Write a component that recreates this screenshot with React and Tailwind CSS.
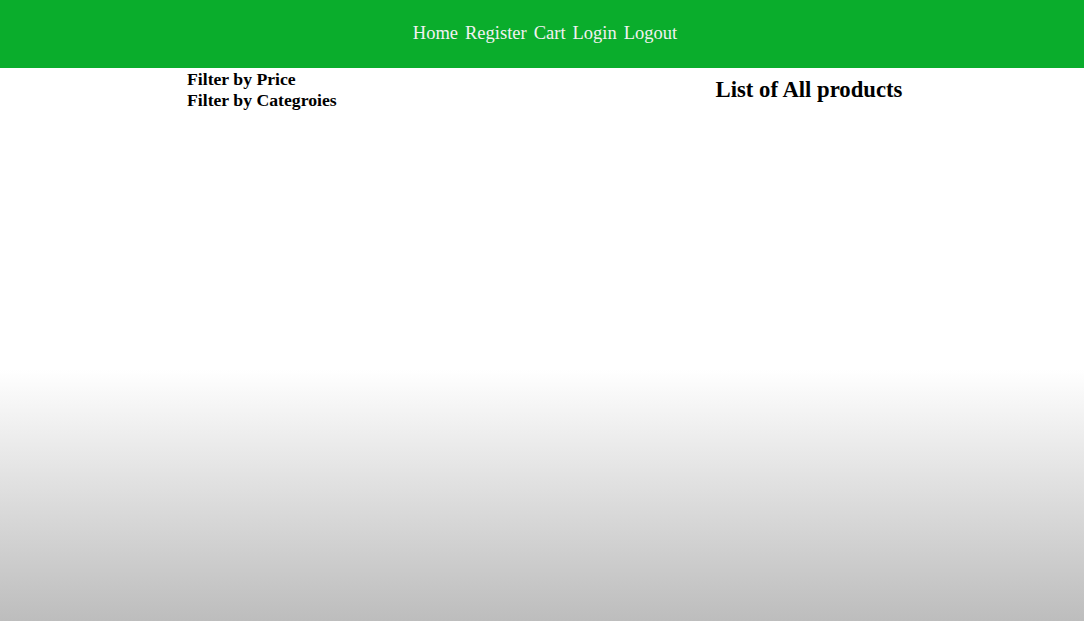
export default function App() {
    const links = ['Home', 'Register', 'Cart', 'Login', 'Logout']

    return (
        <div
            className="h-[621px] w-full bg-gradient-to-b from-white from-[59.5%] to-[#bdbdbd] text-black"
            style={{ fontFamily: '"Liberation Serif", "Times New Roman", serif' }}
        >
            <header className="h-[68px] bg-[#0aad2c] flex items-center justify-center">
                <nav className="flex gap-[7px] text-[18.5px] text-[#f2f2f2] leading-none -mt-[2px] ml-[6px]">
                    {links.map((l) => (
                        <a key={l} href="#" className="cursor-pointer">{l}</a>
                    ))}
                </nav>
            </header>

            <main className="grid grid-cols-2">
                <div className="pl-[187px] pt-[1px]">
                    <h3 className="text-[17.7px] font-bold leading-[21px]">Filter by Price</h3>
                    <h3 className="text-[17.7px] font-bold leading-[21px]">Filter by Categroies</h3>
                </div>
                <div className="text-center pr-[8px] pt-[9px]">
                    <h2 className="text-[22.7px] font-bold leading-[26px]">List of All products</h2>
                </div>
            </main>
        </div>
    )
}
